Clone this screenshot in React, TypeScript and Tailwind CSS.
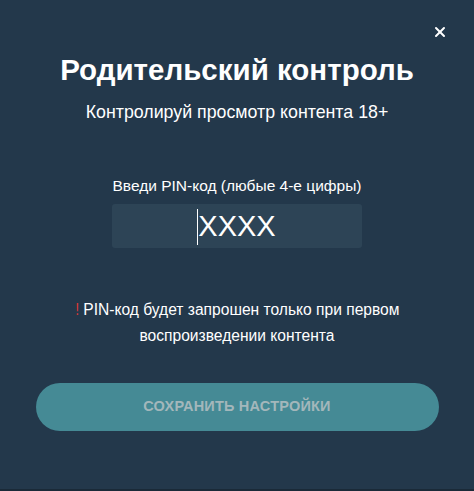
import { X } from 'lucide-react'

export default function App() {
  return (
    <div
      className="relative w-[474px] h-[491px] bg-[#23384b] text-white flex flex-col items-center border-b-2 border-[#1a2a38]"
      style={{ fontFamily: '"Liberation Sans", Arial, sans-serif' }}
    >
      {/* Close */}
      <button className="absolute right-[26px] top-[24px] text-white">
        <X className="w-[16px] h-[16px]" strokeWidth={3} />
      </button>

      <h1 className="mt-[52px] text-[29.5px] leading-[36px] font-bold">Родительский контроль</h1>
      <p className="mt-[13px] text-[17.8px] leading-[22px]">Контролируй просмотр контента 18+</p>

      <label className="mt-[54px] text-[15.5px] leading-[18px]">Введи PIN-код (любые 4-е цифры)</label>
      <div className="mt-[9px] w-[250px] h-[44px] rounded-[3px] bg-[#2d4456] flex items-center justify-center">
        <span className="relative text-[29px] leading-[32px] text-white">
          <span className="absolute left-[-1px] top-[-1px] w-px h-[36px] bg-white" />
          XXXX
        </span>
      </div>

      <div className="mt-[49px] text-[15.6px] leading-[26px] text-center">
        <p>
          <span className="inline-block mr-[4px] text-[17px] leading-none text-[#e53935] scale-x-75">!</span>
          PIN-код будет запрошен только при первом
        </p>
        <p>воспроизведении контента</p>
      </div>

      <button className="mt-[34px] w-[403px] h-[48px] rounded-full bg-[#458a95] text-[#a3b7bb] text-[14.5px] font-bold tracking-[0.2px]">
        СОХРАНИТЬ НАСТРОЙКИ
      </button>
    </div>
  )
}
